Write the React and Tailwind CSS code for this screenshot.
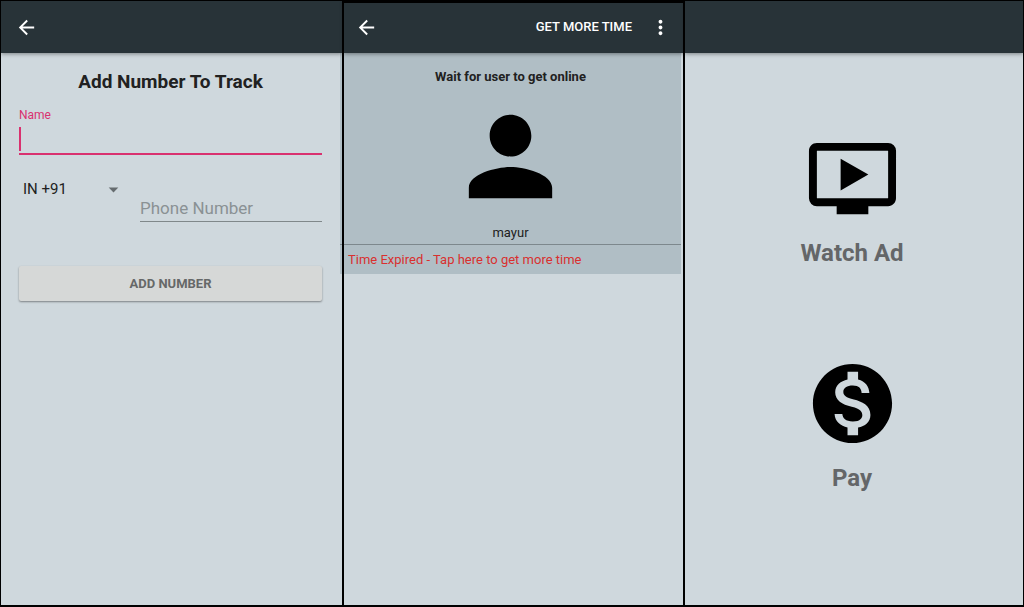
import React from "react";
import {
  MdArrowBack,
  MdArrowDropDown,
  MdMonetizationOn,
  MdMoreVert,
  MdOndemandVideo,
  MdPerson,
} from "react-icons/md";

function AppBar({ children, edged = false }) {
  const shadow = edged
    ? "shadow-[inset_0_2px_0_#000,0_1px_4px_rgba(0,0,0,0.4)]"
    : "shadow-[0_1px_4px_rgba(0,0,0,0.4)]";
  return (
    <header className={`relative z-10 flex h-[52px] shrink-0 items-center bg-[#283338] text-white ${shadow}`}>
      {children}
    </header>
  );
}

function AddNumberScreen() {
  return (
    <section className="flex flex-col bg-[#cfd8dd]">
      <AppBar>
        <button type="button" aria-label="Back" className="ml-3.5">
          <MdArrowBack size={23} />
        </button>
      </AppBar>
      <form className="flex flex-col pt-4 pr-5 pl-[18px]">
        <h1 className="text-center text-[19px] leading-[26px] font-bold text-[#212121]">
          Add Number To Track
        </h1>
        <label htmlFor="name" className="mt-3 text-xs leading-4 text-[#d9316f]">
          Name
        </label>
        <div className="mt-0.5 flex h-[30px] items-center border-b-2 border-[#d9316f]">
          <span className="h-6 w-0.5 bg-[#d9316f]" />
          <input id="name" type="text" className="h-6 min-w-0 grow bg-transparent text-base outline-none" />
        </div>
        <div className="mt-[21px] flex items-start">
          <div className="relative flex w-[121px] shrink-0 items-center">
            <select
              aria-label="Country code"
              className="h-[26px] w-[110px] appearance-none bg-transparent pl-1 text-[15px] text-[#212121] outline-none"
            >
              <option>IN +91</option>
            </select>
            <MdArrowDropDown size={23} className="pointer-events-none absolute right-[15px] text-[#666c6f]" />
          </div>
          <input
            type="tel"
            aria-label="Phone Number"
            placeholder="Phone Number"
            className="mt-[18px] h-7 min-w-0 grow border-b border-[#80888a] bg-transparent text-[17px] outline-none placeholder:text-[#8a9194]"
          />
        </div>
        <button
          type="button"
          className="mt-11 h-[35px] rounded-xs bg-[#d6d8d7] text-[13px] font-bold text-[#666868] shadow-[0_1px_2px_rgba(0,0,0,0.4)]"
        >
          ADD NUMBER
        </button>
      </form>
    </section>
  );
}

function StatusScreen() {
  return (
    <section className="flex flex-col bg-[#cfd8dd]">
      <AppBar edged>
        <button type="button" aria-label="Back" className="ml-[11px]">
          <MdArrowBack size={23} />
        </button>
        <button type="button" className="ml-auto text-[13px] font-medium">
          GET MORE TIME
        </button>
        <button type="button" aria-label="More options" className="mr-[11px] ml-[17px]">
          <MdMoreVert size={23} />
        </button>
      </AppBar>
      <div className="relative mr-0.5 bg-[#b0bec5] before:absolute before:inset-y-0 before:-left-1 before:w-0.5 before:bg-[#b0bec5]">
        <div className="relative flex flex-col items-center border-b border-[#7d888d] pt-3.5 pr-1 pb-px after:absolute after:-bottom-px after:-left-1 after:h-px after:w-0.5 after:bg-[#7d888d]">
          <h2 className="text-[13px] leading-5 font-bold text-[#212121]">Wait for user to get online</h2>
          <MdPerson size={125} className="mt-[7px] text-black" />
          <p className="mt-1 text-[13px] leading-5 text-[#212121]">mayur</p>
        </div>
        <button type="button" className="block h-[29px] w-full pl-1 text-left text-[13px] text-[#d9302f]">
          Time Expired - Tap here to get more time
        </button>
      </div>
    </section>
  );
}

function OptionsScreen() {
  return (
    <section className="flex flex-col bg-[#cfd8dd]">
      <AppBar />
      <div className="flex flex-col items-center gap-[87px] pt-[78px] pr-1 text-2xl leading-8 font-bold text-[#646668]">
        <button type="button" className="flex flex-col items-center gap-[11px]">
          <MdOndemandVideo size={95} className="text-black" />
          Watch Ad
        </button>
        <button type="button" className="flex flex-col items-center gap-[11px]">
          <MdMonetizationOn size={95} className="text-black" />
          Pay
        </button>
      </div>
    </section>
  );
}

export default function App() {
  return (
    <main className="grid min-h-screen grid-cols-[minmax(0,341fr)_minmax(0,339fr)_minmax(0,338fr)] gap-0.5 bg-black px-px pt-px pb-0.5 font-[Roboto,sans-serif]">
      <AddNumberScreen />
      <StatusScreen />
      <OptionsScreen />
    </main>
  );
}
